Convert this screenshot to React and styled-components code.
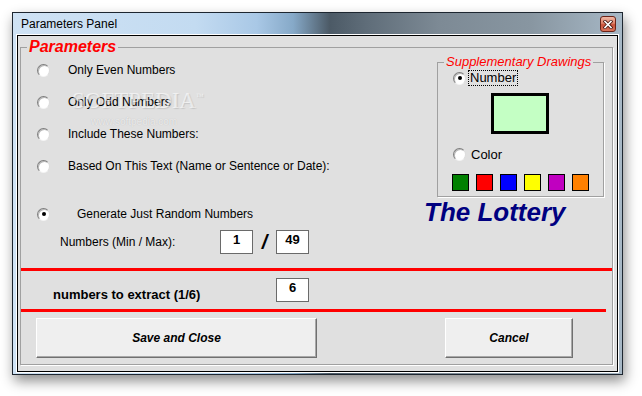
import React from 'react';
import styled, { createGlobalStyle } from 'styled-components';

const GlobalStyle = createGlobalStyle`
  html, body {
    margin: 0;
    padding: 0;
    background: #ffffff;
  }
  body {
    font-family: "Liberation Sans", Arial, sans-serif;
  }
`;

const Page = styled.div`
  width: 642px;
  height: 396px;
  padding: 12px 0 0 12px;
  box-sizing: border-box;
  overflow: hidden;
`;

const Window = styled.div`
  width: 611px;
  height: 363px;
  box-sizing: border-box;
  border: 1px solid #1d2630;
  padding: 0 4px 2px 4px;
  display: flex;
  flex-direction: column;
  background: linear-gradient(90deg, #cfe2f4 0%, #c3dbf1 30%, #a9c8e6 40%, #86a9c8 46%, #4c5a66 52%, #5f6d79 58%, #7d8a95 70%, #8896a1 85%, #a7b8c6 100%);
  box-shadow: 2px 6px 12px rgba(0, 0, 0, 0.45);
`;

const TitleBar = styled.div`
  height: 22px;
  flex-shrink: 0;
  display: flex;
  align-items: center;
  justify-content: space-between;
  padding: 0 2px 0 4px;
  font-size: 12px;
  color: #000;
`;

const CloseButton = styled.div`
  width: 16px;
  height: 16px;
  box-sizing: border-box;
  border: 1px solid #6b2418;
  border-radius: 3px;
  background: linear-gradient(180deg, #f0b8a6 0%, #de8268 45%, #c9523a 55%, #d9735a 100%);
  display: flex;
  align-items: center;
  justify-content: center;
`;

const Client = styled.div`
  flex: 1;
  display: flex;
  flex-direction: column;
  background: #e0e0e0;
  border: 1px solid #000;
  box-shadow: 0 0 0 1px #fff;
  padding: 4px 4px 5px 2px;
`;

const Group = styled.fieldset`
  margin: 0;
  padding: 0;
  min-width: 0;
  border: 1px solid #a0a0a0;
  box-shadow: 1px 1px 0 #fff;
  display: flex;
  flex-direction: column;
`;

const GroupTitle = styled.legend`
  margin-left: ${p => p.$offset}px;
  padding: 0 2px;
  font-style: italic;
  font-weight: ${p => (p.$bold ? 'bold' : 'normal')};
  font-size: ${p => p.$size}px;
  line-height: 14px;
  color: #ff0000;
  white-space: nowrap;
`;

const TopSection = styled.div`
  height: 214px;
  display: flex;
`;

const LeftCol = styled.div`
  flex: 1;
  position: relative;
  padding-left: 16px;
`;

const OptionRow = styled.div`
  display: flex;
  align-items: center;
  height: ${p => p.$h || 32}px;
  margin-top: ${p => p.$top || 0}px;
`;

const Radio = styled.span`
  width: 13px;
  height: 13px;
  box-sizing: border-box;
  border-radius: 50%;
  background: #fff;
  border: 1px solid;
  border-color: #7d7d7d #dcdcdc #f4f4f4 #7d7d7d;
  box-shadow: inset 1px 1px 0 #b8b8b8;
  display: flex;
  align-items: center;
  justify-content: center;
  flex-shrink: 0;

  &::after {
    content: '';
    width: 4px;
    height: 4px;
    border-radius: 50%;
    background: ${p => (p.$checked ? '#000' : 'transparent')};
  }
`;

const OptionLabel = styled.span`
  margin-left: ${p => p.$gap}px;
  font-size: ${p => p.$size || 12}px;
  color: #000;
  white-space: nowrap;
`;

const FocusLabel = styled.span`
  margin-left: 2px;
  padding: 0 1px;
  border: 1px dotted #000;
  font-size: 13px;
  line-height: 14px;
  color: #000;
`;

const NumbersRow = styled.div`
  display: flex;
  align-items: center;
  height: 24px;
  padding-left: 23px;
`;

const NumbersLabel = styled.span`
  width: 160px;
  font-size: 12px;
  color: #000;
`;

const ValueBox = styled.div`
  width: 33px;
  height: 24px;
  box-sizing: border-box;
  border: 1px solid #6a6a6a;
  background: #fff;
  font-size: 13px;
  font-weight: bold;
  line-height: 18px;
  text-align: center;
  color: #000;
  flex-shrink: 0;
`;

const Slash = styled.span`
  width: 23px;
  text-align: center;
  font-size: 20px;
  font-weight: bold;
  font-style: italic;
  color: #000;
`;

const Watermark = styled.div`
  position: absolute;
  left: 51px;
  top: 31px;
  font-family: "Liberation Serif", "Times New Roman", serif;
  font-size: 23px;
  line-height: 24px;
  color: rgba(255, 255, 255, 0.6);
  text-shadow: 1px 1px 1px rgba(0, 0, 0, 0.12);
  pointer-events: none;

  sup {
    font-size: 8px;
  }
`;

const WatermarkUrl = styled.div`
  position: absolute;
  left: 70px;
  top: 62px;
  font-size: 10px;
  color: rgba(255, 255, 255, 0.65);
  text-shadow: 0 0 1px rgba(0, 0, 0, 0.18);
  pointer-events: none;
`;

const RightCol = styled.div`
  width: 181px;
  margin-right: 8px;
  padding-top: 1px;
  display: flex;
  flex-direction: column;
`;

const SupGroup = styled(Group)`
  margin-left: 14px;
  padding: 0 0 5px 0;
`;

const SupBody = styled.div`
  display: flex;
  flex-direction: column;
  padding-left: 15px;
`;

const ColorSample = styled.div`
  width: 58px;
  height: 41px;
  box-sizing: border-box;
  margin: 6px 0 0 38px;
  border: 3px solid #000;
  background: #c4ffc4;
`;

const Swatches = styled.div`
  display: flex;
  gap: 7px;
  margin: 11px 0 0 -1px;
`;

const Swatch = styled.div`
  width: 17px;
  height: 17px;
  box-sizing: border-box;
  border: 1px solid #000;
  background: ${p => p.$color};
`;

const Lottery = styled.div`
  margin-left: 1px;
  font-size: 26px;
  line-height: 30px;
  font-weight: bold;
  font-style: italic;
  color: #000080;
  white-space: nowrap;
`;

const RedLine = styled.div`
  height: 3px;
  background: #ff0000;
  margin-right: ${p => p.$right || 0}px;
`;

const ExtractRow = styled.div`
  height: 38px;
  box-sizing: border-box;
  display: flex;
  align-items: flex-start;
  padding: 7px 0 0 32px;
`;

const ExtractLabel = styled.span`
  width: 223px;
  margin-top: 9px;
  font-size: 13px;
  line-height: 16px;
  font-weight: bold;
  color: #000;
`;

const ButtonRow = styled.div`
  display: flex;
  justify-content: space-between;
  padding: 6px 39px 6px 15px;
`;

const Button = styled.div`
  width: ${p => p.$w}px;
  height: 40px;
  box-sizing: border-box;
  background: #efefef;
  border: 1px solid;
  border-color: #ffffff #707070 #707070 #ffffff;
  box-shadow: inset -1px -1px 0 #a8a8a8;
  display: flex;
  align-items: center;
  justify-content: center;
  font-size: 12px;
  font-weight: bold;
  font-style: italic;
  color: #000;
`;

const options = [
  'Only Even Numbers',
  'Only Odd Numbers',
  'Include These Numbers:',
  'Based On This Text (Name or Sentence or Date):'
];

const swatchColors = ['#008000', '#ff0000', '#0000ff', '#ffff00', '#c000c0', '#ff8000'];

export default function App() {
  return (
    <Page>
      <GlobalStyle />
      <Window>
        <TitleBar>
          <span>Parameters Panel</span>
          <CloseButton>
            <svg width="10" height="9" viewBox="0 0 10 9">
              <path d="M2 1.5 L8 7.5 M8 1.5 L2 7.5" stroke="#4a1810" strokeWidth="3.2" strokeLinecap="square" />
              <path d="M2 1.5 L8 7.5 M8 1.5 L2 7.5" stroke="#ffffff" strokeWidth="1.6" strokeLinecap="square" />
            </svg>
          </CloseButton>
        </TitleBar>
        <Client>
          <Group>
            <GroupTitle $offset={6} $size={16} $bold>Parameters</GroupTitle>
            <TopSection>
              <LeftCol>
                {options.map(text => (
                  <OptionRow key={text}>
                    <Radio />
                    <OptionLabel $gap={18}>{text}</OptionLabel>
                  </OptionRow>
                ))}
                <OptionRow $top={16}>
                  <Radio $checked />
                  <OptionLabel $gap={27}>Generate Just Random Numbers</OptionLabel>
                </OptionRow>
                <NumbersRow>
                  <NumbersLabel>Numbers (Min / Max):</NumbersLabel>
                  <ValueBox>1</ValueBox>
                  <Slash>/</Slash>
                  <ValueBox>49</ValueBox>
                </NumbersRow>
                <Watermark>SOFTPEDIA<sup>™</sup></Watermark>
                <WatermarkUrl>www.softpedia.com</WatermarkUrl>
              </LeftCol>
              <RightCol>
                <SupGroup>
                  <GroupTitle $offset={6} $size={13}>Supplementary Drawings</GroupTitle>
                  <SupBody>
                    <OptionRow $h={18}>
                      <Radio $checked />
                      <FocusLabel>Number</FocusLabel>
                    </OptionRow>
                    <ColorSample />
                    <OptionRow $h={18} $top={11}>
                      <Radio />
                      <OptionLabel $gap={5} $size={13}>Color</OptionLabel>
                    </OptionRow>
                    <Swatches>
                      {swatchColors.map(c => (
                        <Swatch key={c} $color={c} />
                      ))}
                    </Swatches>
                  </SupBody>
                </SupGroup>
                <Lottery>The Lottery</Lottery>
              </RightCol>
            </TopSection>
            <RedLine />
            <ExtractRow>
              <ExtractLabel>numbers to extract (1/6)</ExtractLabel>
              <ValueBox>6</ValueBox>
            </ExtractRow>
            <RedLine $right={6} />
            <ButtonRow>
              <Button $w={281}>Save and Close</Button>
              <Button $w={128}>Cancel</Button>
            </ButtonRow>
          </Group>
        </Client>
      </Window>
    </Page>
  );
}
